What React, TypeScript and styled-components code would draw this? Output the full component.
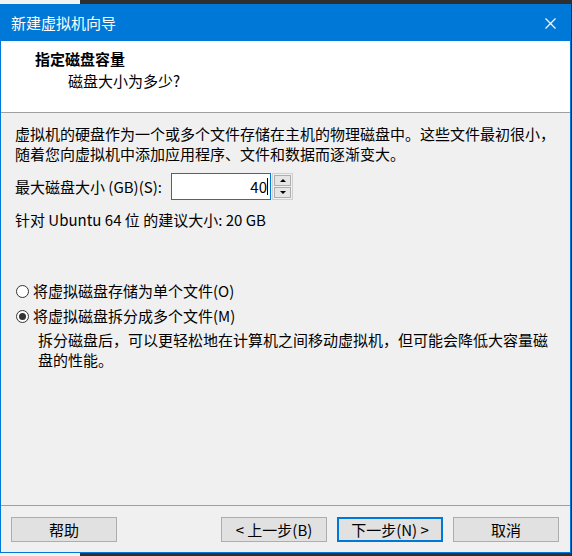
import React, {useState} from 'react';
import styled, {createGlobalStyle} from 'styled-components';

const GlobalStyle = createGlobalStyle`
  html, body {
    margin: 0;
    padding: 0;
  }
  body {
    background: linear-gradient(to right, #f2f2f2 80px, #2f2f2f 80px);
    font-family: "Noto Sans CJK SC", "Noto Sans", sans-serif;
    font-size: 15px;
  }
`;

const Screen = styled.div`
    width: 572px;
    height: 556px;
    padding: 4px 1px 3px 0;
    box-sizing: border-box;
`;

const Window = styled.div`
    width: 571px;
    height: 549px;
    box-sizing: border-box;
    border: 1px solid #0078d7;
    background: #f0f0f0;
    display: flex;
    flex-direction: column;
`;

const TitleBar = styled.div`
    height: 36px;
    flex-shrink: 0;
    background: #0078d7;
    color: #fff;
    display: flex;
    align-items: center;
    justify-content: space-between;
    padding: 0 0 0 10px;
    line-height: 20px;
`;

const CloseButton = styled.div`
    width: 40px;
    height: 36px;
    display: flex;
    align-items: center;
    justify-content: center;
`;

const Header = styled.div`
    height: 72px;
    flex-shrink: 0;
    background: #fff;
    border-bottom: 1px solid #a0a0a0;
    box-sizing: border-box;
    padding: 8px 0 0 34px;
    line-height: 20px;
`;

const HeaderTitle = styled.div`
    font-weight: bold;
    color: #000;
`;

const HeaderSub = styled.div`
    margin-left: 33px;
    margin-top: 2px;
    color: #000;
`;

const Content = styled.div`
    flex: 1;
    padding: 11px 0 0 14px;
    line-height: 20px;
    color: #000;
    display: flex;
    flex-direction: column;
`;

const SizeRow = styled.div`
    display: flex;
    align-items: center;
    margin-top: 9px;
    height: 27px;
`;

const SizeLabel = styled.span`
    width: 156px;
`;

const SizeInput = styled.div`
    width: 100px;
    height: 27px;
    box-sizing: border-box;
    border: 1px solid #0078d7;
    background: #fff;
    display: flex;
    align-items: center;
    justify-content: flex-end;
    padding-right: 2px;
`;

const Caret = styled.span`
    width: 1px;
    height: 17px;
    background: #000;
`;

const Spinner = styled.div`
    margin-left: 1px;
    width: 21px;
    height: 27px;
    box-sizing: border-box;
    border: 1px solid #cfcfcf;
    display: flex;
    flex-direction: column;
    padding: 1px;
    gap: 1px;
`;

const SpinButton = styled.div`
    flex: 1;
    background: #e5e5e5;
    border: 1px solid #adadad;
    display: flex;
    align-items: center;
    justify-content: center;
`;

const Arrow = styled.span<{ $up?: boolean }>`
    width: 0;
    height: 0;
    border-left: 3px solid transparent;
    border-right: 3px solid transparent;
    ${p => p.$up ? 'border-bottom: 3px solid #000;' : 'border-top: 3px solid #000;'}
`;

const Hint = styled.div`
    margin-top: 10px;
`;

const RadioGroup = styled.div`
    margin-top: 51px;
    display: flex;
    flex-direction: column;
    gap: 5px;
`;

const RadioRow = styled.label`
    display: flex;
    align-items: center;
    height: 20px;
    cursor: default;
`;

const RadioCircle = styled.span<{ $checked: boolean }>`
    width: 13px;
    height: 13px;
    box-sizing: border-box;
    border-radius: 50%;
    border: 1px solid #333;
    background: #fff;
    margin: 0 4px 0 1px;
    display: flex;
    align-items: center;
    justify-content: center;
    &::after {
        content: '';
        width: 7px;
        height: 7px;
        border-radius: 50%;
        background: ${p => p.$checked ? '#333' : 'transparent'};
    }
`;

const Description = styled.div`
    margin: 4px 0 0 23px;
    width: 520px;
`;

const Footer = styled.div`
    height: 47px;
    flex-shrink: 0;
    box-sizing: border-box;
    border-top: 1px solid #a0a0a0;
    display: flex;
    align-items: flex-start;
    padding: 11px 11px 0 10px;
`;

const Spacer = styled.div`
    flex: 1;
`;

const WizardButton = styled.button<{ $primary?: boolean }>`
    width: 106px;
    height: 25px;
    box-sizing: border-box;
    margin-left: ${p => p.$primary ? '10px' : '0'};
    margin-right: ${p => p.$primary ? '10px' : '0'};
    background: #e1e1e1;
    border: ${p => p.$primary ? '2px solid #0078d7' : '1px solid #adadad'};
    font-family: inherit;
    font-size: 15px;
    line-height: 18px;
    color: #000;
    padding: 0;
`;

type diskModeType = 'SINGLE' | 'SPLIT';
const modes: Array<{ value: diskModeType, title: string }> = [
    {value: 'SINGLE', title: '将虚拟磁盘存储为单个文件(O)'},
    {value: 'SPLIT', title: '将虚拟磁盘拆分成多个文件(M)'},
];

const App: React.FC = () => {
    const [mode, setMode] = useState<diskModeType>('SPLIT');
    return (
        <Screen>
            <GlobalStyle/>
            <Window>
                <TitleBar>
                    <span>新建虚拟机向导</span>
                    <CloseButton>
                        <svg width="11" height="11" viewBox="0 0 11 11">
                            <path d="M0.5 0.5 L10.5 10.5 M10.5 0.5 L0.5 10.5" stroke="#fff" strokeWidth="1.2"/>
                        </svg>
                    </CloseButton>
                </TitleBar>
                <Header>
                    <HeaderTitle>指定磁盘容量</HeaderTitle>
                    <HeaderSub>磁盘大小为多少?</HeaderSub>
                </Header>
                <Content>
                    <div>
                        虚拟机的硬盘作为一个或多个文件存储在主机的物理磁盘中。这些文件最初很小，<br/>
                        随着您向虚拟机中添加应用程序、文件和数据而逐渐变大。
                    </div>
                    <SizeRow>
                        <SizeLabel>最大磁盘大小 (GB)(S):</SizeLabel>
                        <SizeInput>
                            <span>40</span>
                            <Caret/>
                        </SizeInput>
                        <Spinner>
                            <SpinButton><Arrow $up/></SpinButton>
                            <SpinButton><Arrow/></SpinButton>
                        </Spinner>
                    </SizeRow>
                    <Hint>针对 Ubuntu 64 位 的建议大小: 20 GB</Hint>
                    <RadioGroup>
                        {modes.map(m =>
                            <RadioRow key={m.value} onClick={() => setMode(m.value)}>
                                <RadioCircle $checked={mode === m.value}/>
                                {m.title}
                            </RadioRow>)}
                    </RadioGroup>
                    <Description>
                        拆分磁盘后，可以更轻松地在计算机之间移动虚拟机，但可能会降低大容量磁盘的性能。
                    </Description>
                </Content>
                <Footer>
                    <WizardButton>帮助</WizardButton>
                    <Spacer/>
                    <WizardButton>&lt; 上一步(B)</WizardButton>
                    <WizardButton $primary>下一步(N) &gt;</WizardButton>
                    <WizardButton>取消</WizardButton>
                </Footer>
            </Window>
        </Screen>
    );
};

export default App;
